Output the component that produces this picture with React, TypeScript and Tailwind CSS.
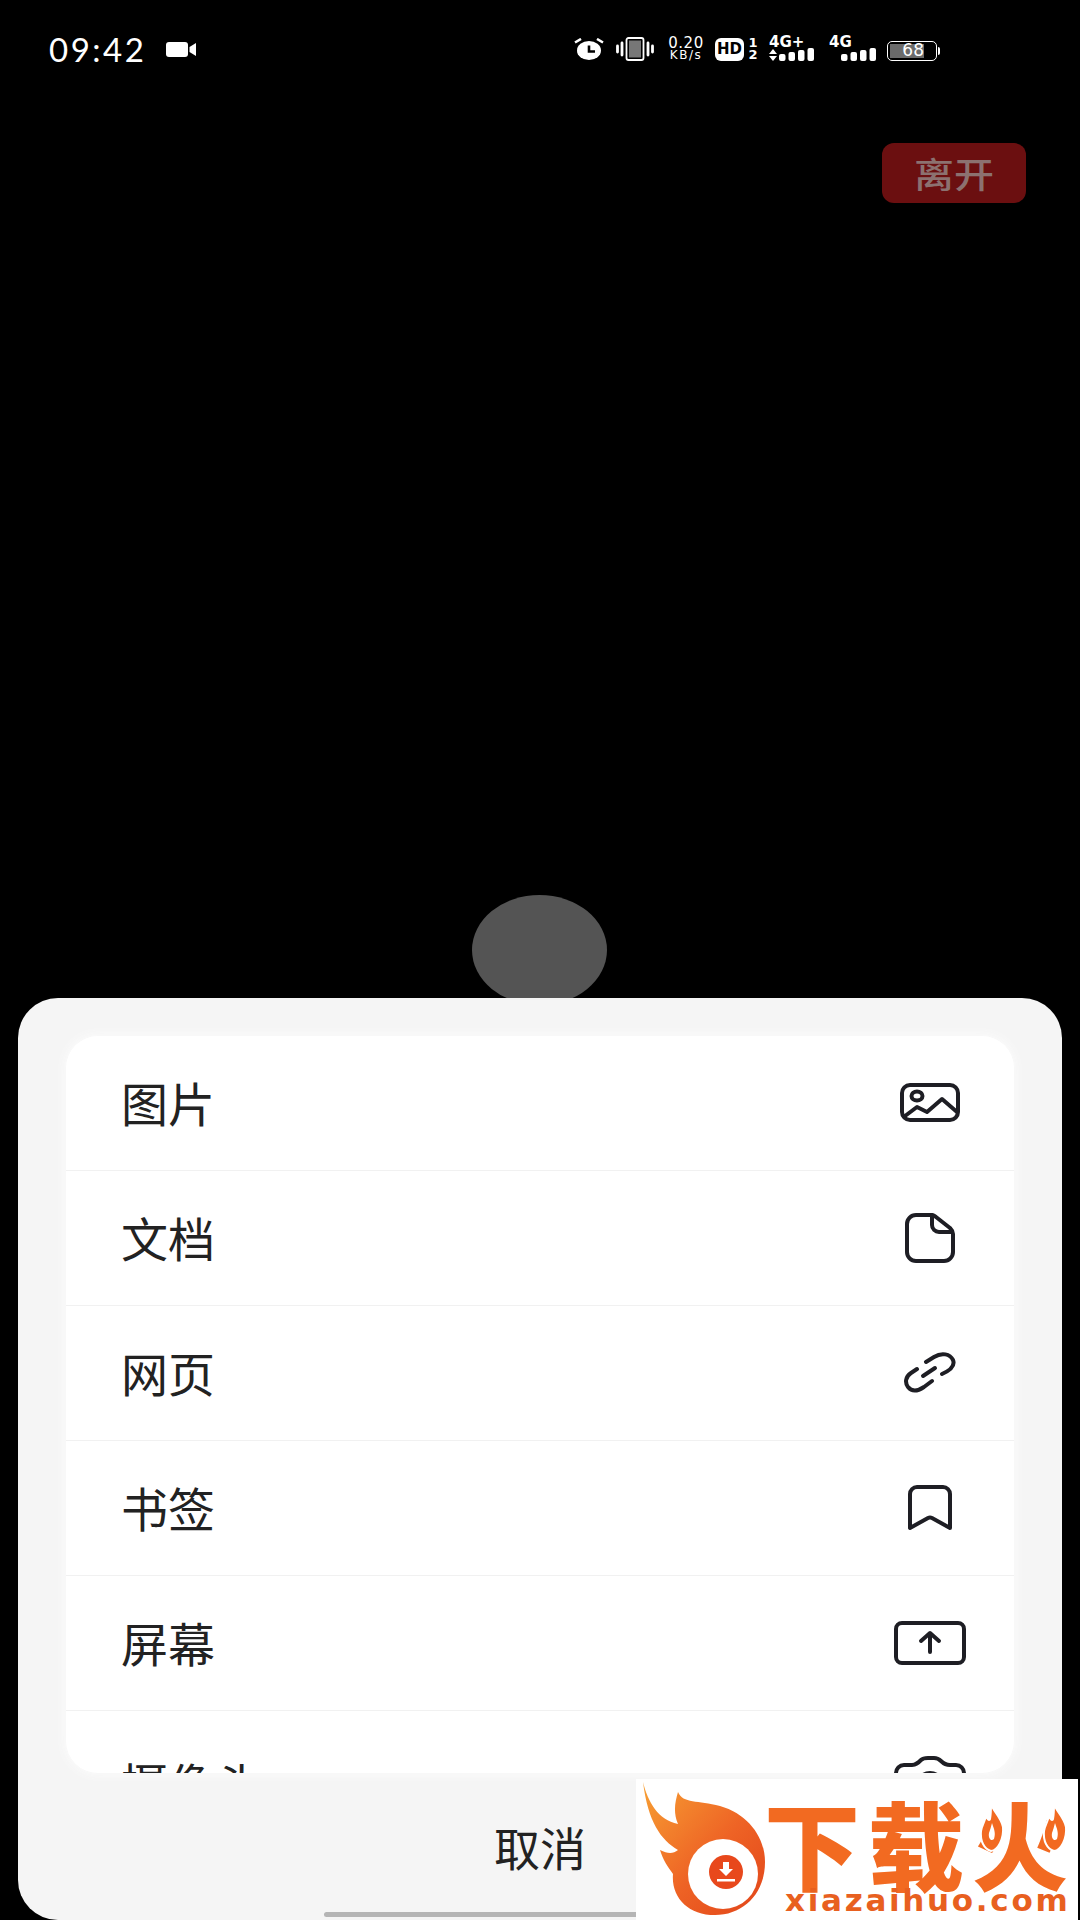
const cjk = "font-['Noto_Sans_CJK_SC','Noto_Sans',sans-serif]"

function ImageIcon() {
  return (
    <svg width="60" height="40" viewBox="0 0 60 40" fill="none" stroke="#1e1e24" strokeWidth="4" strokeLinecap="round" strokeLinejoin="round">
      <rect x="2" y="2" width="56" height="35" rx="8" />
      <ellipse cx="17" cy="13" rx="5.5" ry="4.5" />
      <path d="M5 33 L17 24 L27 29 L42 16 L57 29" />
    </svg>
  )
}

function DocIcon() {
  return (
    <svg width="50" height="50" viewBox="0 0 50 50" fill="none" stroke="#1e1e24" strokeWidth="4" strokeLinecap="round" strokeLinejoin="round">
      <path d="M11 2 H27 Q29 2 31 4 L45 15 Q48 18 48 21 V39 A9 9 0 0 1 39 48 H11 A9 9 0 0 1 2 39 V11 A9 9 0 0 1 11 2 Z" />
      <path d="M27 2 V12 A7 7 0 0 0 34 19 H47" />
    </svg>
  )
}

function LinkIcon() {
  return (
    <svg width="52" height="42" viewBox="0 0 52 42" fill="none" stroke="#1e1e24" strokeWidth="4" strokeLinecap="round" strokeLinejoin="round">
      <path d="M22 10 L30 5 C38 0 46 2 49 8 C51 13 47 18 38 22" />
      <path d="M19 24 L31 16" />
      <path d="M13 17 L7 21 C1 25 1 31 4 35 C8 40 14 39 20 35 L28 29" />
    </svg>
  )
}

function BookmarkIcon() {
  return (
    <svg width="44" height="46" viewBox="0 0 44 46" fill="none" stroke="#1e1e24" strokeWidth="4" strokeLinecap="round" strokeLinejoin="round">
      <path d="M2 43 V9 A7 7 0 0 1 9 2 H35 A7 7 0 0 1 42 9 V43 L24 33 Q22 32 20 33 Z" />
    </svg>
  )
}

function ScreenIcon() {
  return (
    <svg width="72" height="44" viewBox="0 0 72 44" fill="none" stroke="#1e1e24" strokeWidth="4" strokeLinecap="round" strokeLinejoin="round">
      <rect x="2" y="2" width="68" height="40" rx="6" />
      <path d="M36 31 V13 M27 20 L36 12 L45 20" />
    </svg>
  )
}

function CameraIcon() {
  return (
    <svg width="72" height="56" viewBox="0 0 72 56" fill="none" stroke="#1e1e24" strokeWidth="4" strokeLinecap="round" strokeLinejoin="round">
      <path d="M2 54 V17 A8 8 0 0 1 10 9 H18 C22 9 24 7 27 4 C29 2 31 2 34 2 H40 C43 2 45 3 47 5 C50 8 52 9 56 9 H62 A8 8 0 0 1 70 17 V54" />
      <circle cx="36" cy="30" r="13" />
    </svg>
  )
}

function VideoIcon() {
  return (
    <svg width="30" height="15" viewBox="0 0 30 15" fill="#fff">
      <rect x="0" y="0" width="22" height="15" rx="3" />
      <path d="M23.5 5 L30 1 V14 L23.5 10 Z" />
    </svg>
  )
}

function AlarmIcon() {
  return (
    <svg width="30" height="22" viewBox="0 0 30 22">
      <ellipse cx="15" cy="12.5" rx="12" ry="9.5" fill="#fff" />
      <path d="M15 7.5 V13.5 H21" fill="none" stroke="#000" strokeWidth="2.6" />
      <path d="M1 4.5 L7 1 M29 4.5 L23 1" stroke="#fff" strokeWidth="2.6" fill="none" />
    </svg>
  )
}

function VibrateIcon() {
  return (
    <svg width="38" height="24" viewBox="0 0 38 24" fill="none">
      <rect x="10.5" y="1" width="17" height="22" rx="2" stroke="#fff" strokeWidth="1.8" />
      <rect x="13" y="3.5" width="12" height="17" fill="#777" />
      <path d="M6 6 V18 M1.5 9 V15 M32 6 V18 M36.5 9 V15" stroke="#fff" strokeWidth="2.8" strokeLinecap="round" />
    </svg>
  )
}

function Signal() {
  return (
    <svg width="36" height="13" viewBox="0 0 36 13" fill="#fff">
      <rect x="0" y="6" width="6.5" height="7" rx="2" />
      <rect x="9.5" y="4" width="6.5" height="9" rx="2" />
      <rect x="19" y="2" width="6.5" height="11" rx="2" />
      <rect x="28.5" y="0" width="6.5" height="13" rx="2" />
    </svg>
  )
}

function StatusBar() {
  const font = "font-['DejaVu_Sans',sans-serif]"
  return (
    <div className="flex h-[98px] items-start justify-between pt-[37px] pl-[49px] pr-[140px]">
      <div className="flex items-center gap-[20px]">
        <span className="font-['Lato',sans-serif] text-[33px] leading-[24px] tracking-[2.5px] text-white">09:42</span>
        <VideoIcon />
      </div>
      <div className={`flex items-center text-white ${font}`}>
        <AlarmIcon />
        <div className="ml-[12px]">
          <VibrateIcon />
        </div>
        <div className="ml-[13px] flex w-[38px] flex-col items-center text-[15px] leading-[13px] tracking-[0.5px]">
          <span>0.20</span>
          <span className="text-[12px] leading-[11px] tracking-[1.5px]">KB/s</span>
        </div>
        <div className="ml-[10px] flex h-[23px] w-[29px] items-center justify-center rounded-[6px] bg-white text-[15px] leading-none font-bold text-black">
          HD
        </div>
        <div className="ml-[4px] flex w-[10px] flex-col items-center text-[13px] leading-[12px] font-bold">
          <span>1</span>
          <span>2</span>
        </div>
        <div className="ml-[11px] flex w-[47px] flex-col">
          <span className="text-[15px] leading-[11px] font-bold">4G+</span>
          <div className="flex items-end gap-[2px]">
            <div className="flex flex-col gap-[2px]">
              <div className="h-0 w-0 border-x-[4px] border-b-[5px] border-x-transparent border-b-white" />
              <div className="h-0 w-0 border-x-[4px] border-t-[5px] border-x-transparent border-t-white" />
            </div>
            <Signal />
          </div>
        </div>
        <div className="ml-[13px] flex w-[48px] flex-col">
          <span className="text-[15px] leading-[11px] font-bold">4G</span>
          <div className="flex justify-end">
            <Signal />
          </div>
        </div>
        <div className="mt-[3px] ml-[10px] flex items-center gap-[1px]">
          <div className="flex h-[20px] w-[50px] items-center rounded-[5px] border-[1.5px] border-white p-[2px]">
            <div className="flex h-full w-[34px] items-center justify-end bg-[#6b6b6b] text-[17px] leading-none">68</div>
          </div>
          <div className="h-[8px] w-[2px] rounded-r bg-white" />
        </div>
      </div>
    </div>
  )
}

// the two flame tips of the logo's last character
function LogoFlame({ className }: { className: string }) {
  return (
    <svg width="26" height="50" viewBox="0 0 26 50" className={className}>
      <path
        d="M12 1 C14 8 22 14 24 24 C25 36 19 47 12 48 C5 46 1 38 2 28 C3 22 6 18 7 13 C9 17 10 18 11 16 C12 11 12 6 12 1 Z"
        fill="#f26a21"
        stroke="#fff"
        strokeWidth="2"
      />
      <path d="M13 20 C15 26 17 30 15 36 C12 39 9 35 10 30 C11 27 12 24 13 20 Z" fill="#fff" />
    </svg>
  )
}

function Logo() {
  return (
    <div className="absolute top-[1779px] left-[636px] z-20 flex h-[141px] w-[442px] items-start overflow-hidden bg-white pt-[3px] pl-[7px]">
      <svg width="122" height="134" viewBox="0 0 122 134" className="shrink-0">
        <defs>
          <linearGradient id="flame" x1="0" y1="0" x2="1" y2="1">
            <stop offset="0" stopColor="#f7a033" />
            <stop offset="0.55" stopColor="#ee6325" />
            <stop offset="1" stopColor="#e2451a" />
          </linearGradient>
        </defs>
        <path
          d="M0 0 C5 20 15 38 35 42 C30 30 32 20 35 10 C40 22 55 18 77 24 C105 32 122 55 122 80 C122 112 100 133 72 133 C45 133 28 115 30 92 C25 85 20 78 17 68 C25 72 30 72 35 68 C18 58 5 40 0 0 Z"
          fill="url(#flame)"
        />
        <circle cx="80" cy="92" r="35" fill="#fff" />
        <circle cx="83" cy="90" r="17" fill="#e8481c" />
        <path d="M80 80 H86 V87 H90 L83 94 L76 87 H80 Z" fill="#fff" />
        <rect x="74" y="97" width="18" height="2.5" fill="#fff" />
      </svg>
      <div className="flex flex-col">
        <div className={`${cjk} mt-[17px] -ml-[1px] h-[85px] text-[96px] leading-[85px] font-black tracking-[8px] whitespace-nowrap text-[#f26a21]`}>
          下载火
        </div>
        <div className="mt-[2px] ml-[20px] font-['DejaVu_Sans',sans-serif] text-[31px] leading-[28px] font-bold tracking-[2.7px] whitespace-nowrap text-[#e8601f]">
          xiazaihuo.com
        </div>
      </div>
      <LogoFlame className="absolute top-[24px] left-[343px]" />
      <LogoFlame className="absolute top-[24px] left-[406px]" />
    </div>
  )
}

const rows = [
  { label: "图片", icon: <ImageIcon /> },
  { label: "文档", icon: <DocIcon /> },
  { label: "网页", icon: <LinkIcon /> },
  { label: "书签", icon: <BookmarkIcon /> },
  { label: "屏幕", icon: <ScreenIcon /> },
]

export default function App() {
  return (
    <div className={`relative flex h-[1920px] w-[1080px] flex-col overflow-hidden bg-black ${cjk}`}>
      <StatusBar />
      <div className="mt-[45px] mr-[54px] flex h-[60px] w-[144px] items-center justify-center self-end rounded-[12px] bg-[#6b0f10]">
        <span className="scale-y-[0.88] text-[40px] leading-none font-medium text-[#8c7170]">离开</span>
      </div>
      <div className="mt-[692px] mr-[2px] -mb-[7px] h-[110px] w-[135px] self-center rounded-[50%] bg-[#545454]" />
      <div className="relative z-10 mx-[18px] flex flex-1 flex-col overflow-hidden rounded-[40px] bg-[#f5f5f5]">
        <div className="mx-[48px] mt-[38px] h-[737px] overflow-hidden rounded-[32px] bg-white shadow-[0_0_10px_2px_#fbfbfb]">
          {rows.map((row) => (
            <div key={row.label} className="flex h-[135px] items-center justify-between border-b border-[#f1f1f1] pr-[44px] pb-[4px] pl-[55px]">
              <span className="text-[47px] leading-none text-[#222]">{row.label}</span>
              <div className="mt-[3px] flex w-[80px] justify-center">{row.icon}</div>
            </div>
          ))}
          <div className="flex h-[135px] items-center justify-between pt-[8px] pr-[44px] pl-[55px]">
            <span className="text-[47px] leading-none text-[#222]">摄像头</span>
            <div className="flex w-[80px] justify-center self-start pt-[37px]">
              <CameraIcon />
            </div>
          </div>
        </div>
        <div className="flex flex-1 flex-col items-center">
          <div className="flex flex-1 items-center pt-[6px]">
            <span className="text-[46px] leading-none text-[#222]">取消</span>
          </div>
          <div className="mb-[3px] h-[5px] w-[432px] rounded-full bg-[#b5b5b5]" />
        </div>
      </div>
      <Logo />
    </div>
  )
}
